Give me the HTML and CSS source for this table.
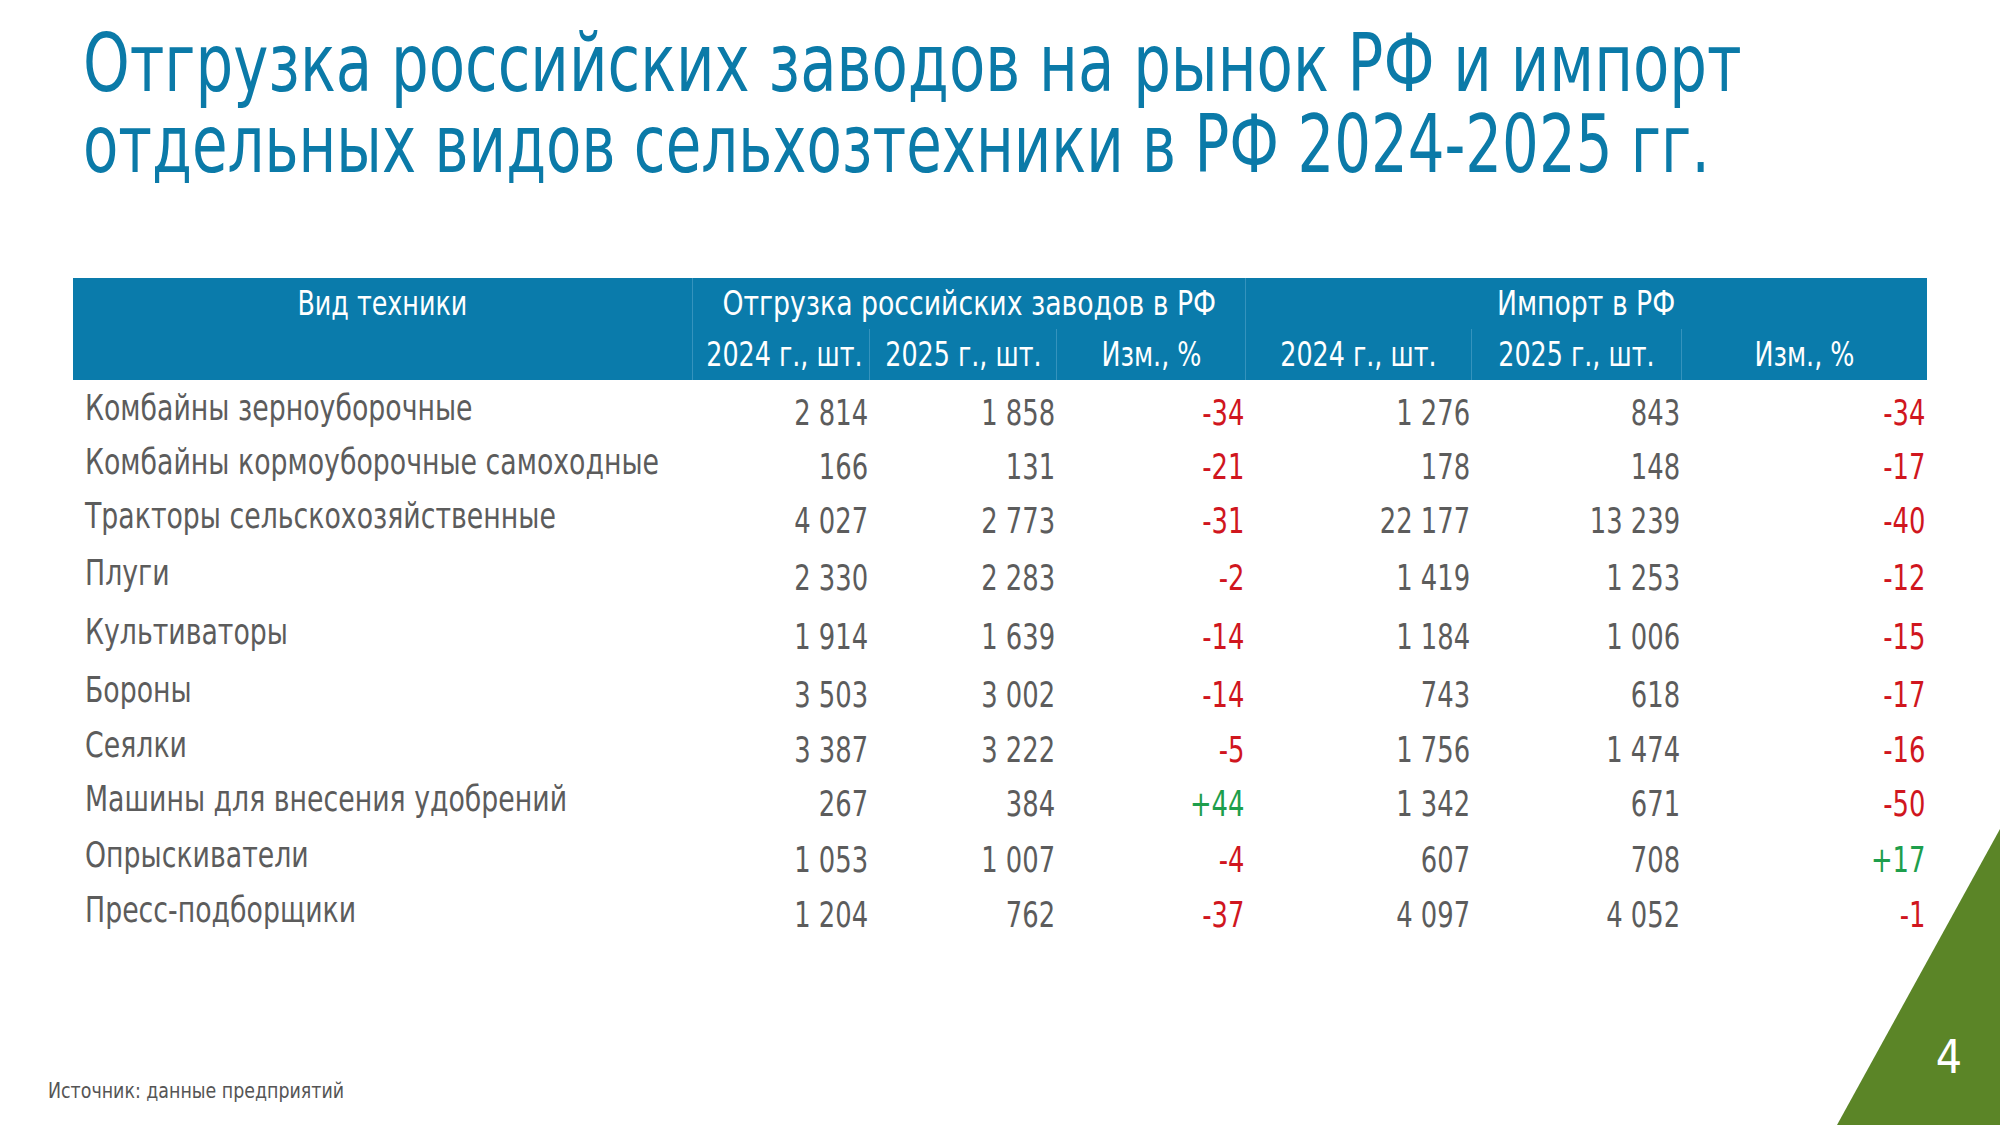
FILE: index.html
```html
<!DOCTYPE html>
<html lang="ru">
<head>
<meta charset="utf-8">
<title>Отгрузка и импорт сельхозтехники</title>
<link rel="stylesheet" href="styles.css">
</head>
<body>
<div class="slide">
  <h1 class="title"><span class="t line1">Отгрузка российских заводов на рынок РФ и импорт</span><span class="t line2">отдельных видов сельхозтехники в РФ 2024-2025 гг.</span></h1>

  <div class="table">
    <div class="thead">
      <div class="th th-kind sep"><span class="t">Вид техники</span></div>
      <div class="th th-group1 sep"><span class="t">Отгрузка российских заводов в РФ</span></div>
      <div class="th th-group2"><span class="t">Импорт в РФ</span></div>
      <div class="th sub sep"><span class="t">2024 г., шт.</span></div>
      <div class="th sub sep"><span class="t">2025 г., шт.</span></div>
      <div class="th sub sep"><span class="t">Изм., %</span></div>
      <div class="th sub sep"><span class="t">2024 г., шт.</span></div>
      <div class="th sub sep"><span class="t">2025 г., шт.</span></div>
      <div class="th sub"><span class="t">Изм., %</span></div>
    </div>
    <div class="tbody">
      <div class="row"><div class="label"><span class="t">Комбайны зерноуборочные</span></div><div class="num"><span class="t">2 814</span></div><div class="num"><span class="t">1 858</span></div><div class="num neg"><span class="t">-34</span></div><div class="num"><span class="t">1 276</span></div><div class="num"><span class="t">843</span></div><div class="num neg"><span class="t">-34</span></div></div>
      <div class="row"><div class="label"><span class="t">Комбайны кормоуборочные самоходные</span></div><div class="num"><span class="t">166</span></div><div class="num"><span class="t">131</span></div><div class="num neg"><span class="t">-21</span></div><div class="num"><span class="t">178</span></div><div class="num"><span class="t">148</span></div><div class="num neg"><span class="t">-17</span></div></div>
      <div class="row"><div class="label"><span class="t">Тракторы сельскохозяйственные</span></div><div class="num"><span class="t">4 027</span></div><div class="num"><span class="t">2 773</span></div><div class="num neg"><span class="t">-31</span></div><div class="num"><span class="t">22 177</span></div><div class="num"><span class="t">13 239</span></div><div class="num neg"><span class="t">-40</span></div></div>
      <div class="row"><div class="label"><span class="t">Плуги</span></div><div class="num"><span class="t">2 330</span></div><div class="num"><span class="t">2 283</span></div><div class="num neg"><span class="t">-2</span></div><div class="num"><span class="t">1 419</span></div><div class="num"><span class="t">1 253</span></div><div class="num neg"><span class="t">-12</span></div></div>
      <div class="row"><div class="label"><span class="t">Культиваторы</span></div><div class="num"><span class="t">1 914</span></div><div class="num"><span class="t">1 639</span></div><div class="num neg"><span class="t">-14</span></div><div class="num"><span class="t">1 184</span></div><div class="num"><span class="t">1 006</span></div><div class="num neg"><span class="t">-15</span></div></div>
      <div class="row"><div class="label"><span class="t">Бороны</span></div><div class="num"><span class="t">3 503</span></div><div class="num"><span class="t">3 002</span></div><div class="num neg"><span class="t">-14</span></div><div class="num"><span class="t">743</span></div><div class="num"><span class="t">618</span></div><div class="num neg"><span class="t">-17</span></div></div>
      <div class="row"><div class="label"><span class="t">Сеялки</span></div><div class="num"><span class="t">3 387</span></div><div class="num"><span class="t">3 222</span></div><div class="num neg"><span class="t">-5</span></div><div class="num"><span class="t">1 756</span></div><div class="num"><span class="t">1 474</span></div><div class="num neg"><span class="t">-16</span></div></div>
      <div class="row"><div class="label"><span class="t">Машины для внесения удобрений</span></div><div class="num"><span class="t">267</span></div><div class="num"><span class="t">384</span></div><div class="num pos"><span class="t">+44</span></div><div class="num"><span class="t">1 342</span></div><div class="num"><span class="t">671</span></div><div class="num neg"><span class="t">-50</span></div></div>
      <div class="row"><div class="label"><span class="t">Опрыскиватели</span></div><div class="num"><span class="t">1 053</span></div><div class="num"><span class="t">1 007</span></div><div class="num neg"><span class="t">-4</span></div><div class="num"><span class="t">607</span></div><div class="num"><span class="t">708</span></div><div class="num pos"><span class="t">+17</span></div></div>
      <div class="row"><div class="label"><span class="t">Пресс-подборщики</span></div><div class="num"><span class="t">1 204</span></div><div class="num"><span class="t">762</span></div><div class="num neg"><span class="t">-37</span></div><div class="num"><span class="t">4 097</span></div><div class="num"><span class="t">4 052</span></div><div class="num neg"><span class="t">-1</span></div></div>
    </div>
  </div>

  <div class="source"><span class="t">Источник: данные предприятий</span></div>

  <svg class="corner" width="163" height="296" viewBox="0 0 163 296" aria-hidden="true">
    <polygon points="163,0 163,296 0,296" fill="#5b8527"/>
  </svg>
  <div class="page-num">4</div>
</div>
</body>
</html>
```

FILE: styles.css
```css
html, body {
  margin: 0;
  padding: 0;
  background: #ffffff;
}

body {
  font-family: "DejaVu Sans Condensed", "DejaVu Sans", sans-serif;
  font-stretch: condensed;
  color: #5c5c5c;
}

.slide {
  position: relative;
  width: 2000px;
  height: 1125px;
  overflow: hidden;
  display: flex;
  flex-direction: column;
}

/* condensed text: glyphs narrowed horizontally to match the slide's condensed face */
.t {
  display: inline-block;
  white-space: nowrap;
}

.title {
  margin: 23px 0 0 83px;
  font-size: 80px;
  line-height: 81px;
  font-weight: normal;
  color: #0b7aa8;
  white-space: nowrap;
}

.title .t {
  display: block;
  width: max-content;
  transform-origin: 0 50%;
}

.title .line1 {
  transform: scaleX(0.825);
}

.title .line2 {
  transform: scaleX(0.803);
}

.table {
  margin: 93px 0 0 73px;
  width: 1854px;
}

.thead,
.row {
  display: grid;
  grid-template-columns: 620px 177px 187px 189px 226px 210px 245px;
}

.thead {
  grid-template-rows: 51px 51px;
  background: #0a7bab;
  color: #ffffff;
}

.th {
  font-size: 33px;
  line-height: 51px;
  text-align: center;
  white-space: nowrap;
}

.th .t {
  transform: scaleX(0.855);
  transform-origin: center;
}

.th-group1 .t,
.th-group2 .t {
  transform: scaleX(0.9);
}

.sep {
  border-right: 1px solid #3593bd;
}

.th-kind {
  grid-column: 1;
  grid-row: 1 / span 2;
}

.th-group1 {
  grid-column: 2 / span 3;
  grid-row: 1;
}

.th-group2 {
  grid-column: 5 / span 3;
  grid-row: 1;
}

.sub {
  grid-row: 2;
}

.tbody {
  padding-top: 6px;
}

.row {
  align-items: center;
  font-size: 35px;
  white-space: nowrap;
}

.row:nth-child(1) { height: 54px; }
.row:nth-child(2) { height: 53px; }
.row:nth-child(3) { height: 56px; }
.row:nth-child(4) { height: 58px; }
.row:nth-child(5) { height: 59px; }
.row:nth-child(6) { height: 57px; }
.row:nth-child(7) { height: 53px; }
.row:nth-child(8) { height: 56px; }
.row:nth-child(9) { height: 56px; }
.row:nth-child(10) { height: 54px; }

.label {
  padding: 0 0 10px 12px;
}

.label .t {
  transform: scaleX(0.85);
  transform-origin: left center;
}

.num {
  text-align: right;
  padding-right: 2px;
}

.num .t {
  transform: scaleX(0.82);
  transform-origin: right center;
}

.neg {
  color: #d0161e;
}

.pos {
  color: #1e9e4c;
}

.source {
  margin-top: auto;
  padding: 0 0 21px 48px;
  font-size: 22px;
  line-height: 26px;
  color: #555555;
}

.source .t {
  transform: scaleX(0.88);
  transform-origin: left center;
}

.corner {
  position: absolute;
  right: 0;
  bottom: 0;
  display: block;
}

.page-num {
  position: absolute;
  right: 38px;
  bottom: 45px;
  font-size: 46px;
  line-height: 46px;
  color: #ffffff;
}
```
